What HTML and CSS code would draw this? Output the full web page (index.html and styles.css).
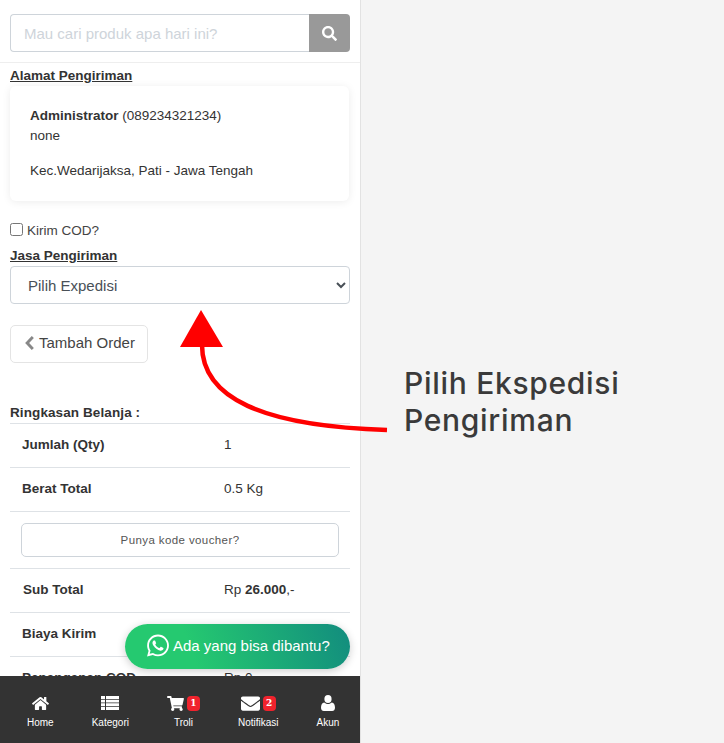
FILE: index.html
```html
<!DOCTYPE html>
<html lang="en">
<head>
    <meta charset="UTF-8">
    <meta name="viewport" content="width=device-width, initial-scale=1.0">
    <title>Checkout</title>
    <link rel="stylesheet" href="styles.css">
</head>
<body>

    <div class="page">
        <div class="app">
            <form class="search">
                <input class="search-input" type="text" placeholder="Mau cari produk apa hari ini?">
                <button class="search-btn" type="button">
                    <svg viewBox="0 0 512 512" width="15" height="15"><path fill="#fff" d="M505 442.7L405.3 343c-4.5-4.5-10.6-7-17-7H372c27.6-35.3 44-79.7 44-128C416 93.1 322.9 0 208 0S0 93.1 0 208s93.1 208 208 208c48.3 0 92.7-16.4 128-44v16.3c0 6.4 2.5 12.5 7 17l99.7 99.7c9.4 9.4 24.6 9.4 33.9 0l28.3-28.3c9.4-9.4 9.4-24.6.1-34zM208 336c-70.7 0-128-57.2-128-128 0-70.7 57.2-128 128-128 70.7 0 128 57.2 128 128 0 70.7-57.2 128-128 128z"/></svg>
                </button>
            </form>

            <div class="content">
                <div class="section-title">Alamat Pengiriman</div>
                <div class="card">
                    <div><b>Administrator</b> (089234321234)</div>
                    <div>none</div>
                    <div class="card-area">Kec.Wedarijaksa, Pati - Jawa Tengah</div>
                </div>

                <label class="cod"><input type="checkbox"> Kirim COD?</label>

                <div class="section-title">Jasa Pengiriman</div>
                <select class="courier">
                    <option>Pilih Expedisi</option>
                </select>

                <button class="back-btn" type="button">
                    <svg class="back-icon" viewBox="0 0 10 16" width="11" height="14"><path fill="#888" d="M7.600 0L10 2.400 4.600 8 10 13.600 7.600 16 0 8z"/></svg>
                    Tambah Order
                </button>

                <div class="summary-title">Ringkasan Belanja :</div>
                <table class="summary">
                    <tr><th>Jumlah (Qty)</th><td>1</td></tr>
                    <tr><th>Berat Total</th><td>0.5 Kg</td></tr>
                    <tr><td colspan="2" class="voucher-cell"><button class="voucher-btn" type="button">Punya kode voucher?</button></td></tr>
                    <tr><th class="shift">Sub Total</th><td>Rp <b>26.000</b>,-</td></tr>
                    <tr><th>Biaya Kirim</th><td></td></tr>
                    <tr><th>Penanganan COD</th><td>Rp 0</td></tr>
                </table>
            </div>

            <a class="wa-btn" href="#">
                <svg viewBox="0 0 448 512" width="22" height="25"><path fill="#fff" d="M380.9 97.1C339 55.1 283.2 32 223.9 32c-122.4 0-222 99.6-222 222 0 39.1 10.2 77.3 29.6 111L0 480l117.7-30.9c32.4 17.7 68.9 27 106.1 27h.1c122.3 0 224.1-99.6 224.1-222 0-59.3-25.2-115-67.1-157zm-157 341.6c-33.2 0-65.7-8.9-94-25.7l-6.7-4-69.8 18.3L72 359.2l-4.4-7c-18.5-29.4-28.2-63.3-28.2-98.2 0-101.7 82.8-184.5 184.6-184.5 49.3 0 95.6 19.2 130.4 54.1 34.8 34.9 56.2 81.2 56.1 130.5 0 101.8-84.9 184.6-186.6 184.6zm101.2-138.2c-5.5-2.8-32.8-16.2-37.9-18-5.1-1.9-8.8-2.8-12.5 2.8-3.7 5.6-14.3 18-17.6 21.8-3.2 3.7-6.5 4.2-12 1.4-32.6-16.3-54-29.1-75.5-66-5.7-9.8 5.7-9.1 16.3-30.3 1.8-3.7.9-6.9-.5-9.7-1.4-2.8-12.5-30.1-17.1-41.2-4.5-10.8-9.1-9.3-12.5-9.5-3.2-.2-6.9-.2-10.6-.2-3.7 0-9.7 1.4-14.8 6.9-5.1 5.6-19.4 19-19.4 46.3 0 27.3 19.9 53.7 22.6 57.4 2.8 3.7 39.1 59.7 94.8 83.8 35.2 15.2 49 16.5 66.6 13.9 10.7-1.6 32.8-13.4 37.4-26.4 4.6-13 4.6-24.1 3.2-26.4-1.3-2.5-5-3.9-10.5-6.6z"/></svg>
                Ada yang bisa dibantu?
            </a>

            <nav class="bottom-nav">
                <a class="nav-item" href="#">
                    <span class="nav-icon"><svg viewBox="0 0 576 512" width="17" height="15"><path fill="#fff" d="M280.37 148.26L96 300.11V464a16 16 0 0 0 16 16l112.06-.29a16 16 0 0 0 15.92-16V368a16 16 0 0 1 16-16h64a16 16 0 0 1 16 16v95.64a16 16 0 0 0 16 16.05L464 480a16 16 0 0 0 16-16V300L295.67 148.26a12.19 12.19 0 0 0-15.3 0zM571.6 251.47L488 182.56V44.05a12 12 0 0 0-12-12h-56a12 12 0 0 0-12 12v72.61L318.47 43a48 48 0 0 0-61 0L4.34 251.47a12 12 0 0 0-1.6 16.9l25.5 31A12 12 0 0 0 45.15 301l235.22-193.74a12.19 12.19 0 0 1 15.3 0L530.9 301a12 12 0 0 0 16.9-1.6l25.5-31a12 12 0 0 0-1.7-16.93z"/></svg></span>
                    Home
                </a>
                <a class="nav-item" href="#">
                    <span class="nav-icon"><svg viewBox="0 0 18 14" width="18" height="14"><path fill="#fff" d="M0 0h4v3H0zM5 0h13v3H5zM0 3.700h4v2.800H0zM5 3.700h13v2.800H5zM0 7.200h4V10H0zM5 7.200h13V10H5zM0 10.700h4V14H0zM5 10.700h13V14H5z"/></svg></span>
                    Kategori
                </a>
                <a class="nav-item" href="#">
                    <span class="nav-icon"><svg viewBox="0 0 576 512" width="17" height="15"><path fill="#fff" d="M528.12 301.319l47.273-208C578.806 78.301 567.391 64 551.99 64H159.208l-9.166-44.81C147.758 8.021 137.93 0 126.529 0H24C10.745 0 0 10.745 0 24v16c0 13.255 10.745 24 24 24h69.883l70.248 343.435C147.325 417.1 136 435.222 136 456c0 30.928 25.072 56 56 56s56-25.072 56-56c0-15.674-6.447-29.835-16.824-40h209.647C430.447 426.165 424 440.326 424 456c0 30.928 25.072 56 56 56s56-25.072 56-56c0-22.172-12.888-41.332-31.579-50.405l5.517-24.276c3.413-15.018-8.002-29.319-23.403-29.319H218.117l-6.545-32h293.145c11.206 0 20.92-7.754 23.403-18.681z"/></svg><span class="badge">1</span></span>
                    Troli
                </a>
                <a class="nav-item" href="#">
                    <span class="nav-icon"><svg viewBox="0 0 512 512" width="19" height="19"><path fill="#fff" d="M502.3 190.8c3.9-3.1 9.7-.2 9.7 4.7V400c0 26.5-21.5 48-48 48H48c-26.5 0-48-21.5-48-48V195.6c0-5 5.7-7.8 9.7-4.7 22.4 17.4 52.1 39.5 154.1 113.6 21.1 15.4 56.7 47.8 92.2 47.6 35.7.3 72-32.8 92.3-47.6 102-74.1 131.6-96.3 154-113.7zM256 320c23.2.4 56.6-29.2 73.4-41.4 132.7-96.3 142.8-104.7 173.4-128.7 5.8-4.5 9.2-11.5 9.2-18.9v-19c0-26.5-21.5-48-48-48H48C21.5 64 0 85.5 0 112v19c0 7.4 3.4 14.3 9.2 18.9 30.6 23.9 40.7 32.4 173.4 128.7 16.8 12.2 50.2 41.8 73.4 41.4z"/></svg><span class="badge">2</span></span>
                    Notifikasi
                </a>
                <a class="nav-item" href="#">
                    <span class="nav-icon"><svg viewBox="0 0 14 16" width="14" height="16"><ellipse cx="7" cy="4" rx="3.600" ry="4" fill="#fff"/><path fill="#fff" d="M3.200 7.400C4.200 8.300 5.500 8.900 7 8.900s2.800-.6 3.800-1.500c2 .3 3.200 2.100 3.200 5.300 0 2-1.200 3.300-2.900 3.300H2.900C1.200 16 0 14.700 0 12.700c0-3.200 1.200-5 3.200-5.300z"/></svg></span>
                    Akun
                </a>
            </nav>
        </div>

        <div class="side">
            <p class="note">Pilih Ekspedisi<br>Pengiriman</p>
        </div>

        <!-- Panah penunjuk ke pilihan expedisi -->
        <svg class="arrow" viewBox="0 0 724 743" width="724" height="743">
            <path d="M202 345C202 398 262 426 387 430" fill="none" stroke="#f00" stroke-width="4.500"/>
            <path d="M201 310L223 347H180z" fill="#f00"/>
        </svg>
    </div>

</body>
</html>
```

FILE: styles.css
```css
html, body {
    margin: 0;
    height: 100%;
    overflow: hidden;
}

body {
    font-family: "Liberation Sans", Arial, sans-serif;
    font-size: 13.5px;
    color: #333;
}

.page {
    position: relative;
    display: flex;
    height: 743px;
}

.app {
    position: relative;
    width: 360px;
    height: 743px;
    overflow: hidden;
    background-color: #fff;
    border-right: 1px solid #e2e2e2;
    flex-shrink: 0;
}

.side {
    flex: 1;
    background-color: #f4f4f4;
    padding: 365px 0 0 43px;
}

.note {
    margin: 0;
    font-family: "Inter", sans-serif;
    font-size: 30px;
    font-weight: 500;
    line-height: 37px;
    letter-spacing: 0.7px;
    color: #3a3a3a;
}

.arrow {
    position: absolute;
    top: 0;
    left: 0;
    pointer-events: none;
}

/* search */
.search {
    display: flex;
    margin: 0;
    padding: 14px 10px 10px;
    border-bottom: 1px solid #eee;
}

.search-input {
    flex: 1;
    min-width: 0;
    height: 38px;
    box-sizing: border-box;
    padding: 0 13px;
    border: 1px solid #ced4da;
    border-right: 0;
    border-radius: 4px 0 0 4px;
    font-family: inherit;
    font-size: 15px;
    outline: none;
}

.search-input::placeholder {
    color: #ced4da;
}

.search-btn {
    display: flex;
    align-items: center;
    justify-content: center;
    width: 41px;
    height: 38px;
    padding: 0;
    border: 0;
    border-radius: 0 4px 4px 0;
    background-color: #999;
}

/* content */
.content {
    padding: 4px 10px 0;
}

.section-title {
    font-weight: bold;
    line-height: 17px;
    text-decoration: underline;
}

.card {
    width: 339px;
    box-sizing: border-box;
    height: 115px;
    margin: 2px 0 19px;
    padding: 20px 20px 0;
    line-height: 20px;
    border-radius: 6px;
    box-shadow: 0 1px 8px rgba(0, 0, 0, 0.08);
}

.card-area {
    margin-top: 15px;
}

.cod {
    display: flex;
    align-items: center;
    gap: 4px;
    height: 20px;
    margin-bottom: 7px;
    color: #444;
}

.cod input {
    width: 13px;
    height: 13px;
    margin: 0 0 2px;
}

.courier {
    display: block;
    width: 340px;
    height: 38px;
    margin-top: 2px;
    padding: 0 13px;
    border: 1px solid #ced4da;
    border-radius: 4px;
    background-color: #fff;
    font-family: inherit;
    font-size: 15px;
    color: #495057;
}

.back-btn {
    display: flex;
    align-items: center;
    gap: 4px;
    width: 138px;
    height: 38px;
    margin: 21px 0 41px;
    padding: 0 13px 3px;
    border: 1px solid #e4e4e4;
    border-radius: 5px;
    background-color: #fff;
    font-family: inherit;
    font-size: 15px;
    color: #444;
    white-space: nowrap;
}

.back-icon {
    flex-shrink: 0;
}

.summary-title {
    font-weight: bold;
    line-height: 17px;
    letter-spacing: 0.1px;
}

.summary {
    width: 340px;
    margin-top: 2px;
    border-collapse: collapse;
    border-top: 1px solid #dee2e6;
}

.summary th, .summary td {
    height: 41px;
    padding: 0 12px 2px;
    border-bottom: 1px solid #dee2e6;
    text-align: left;
}

.summary th {
    width: 178px;
}

.summary th.shift {
    padding-left: 13px;
    padding-right: 11px;
}

.summary .voucher-cell {
    height: 56px;
    padding: 0 11px;
}

.voucher-btn {
    display: block;
    width: 318px;
    height: 34px;
    border: 1px solid #ced4da;
    border-radius: 5px;
    background-color: #fff;
    font-family: inherit;
    font-size: 11.5px;
    letter-spacing: 0.4px;
    color: #555;
}

/* floating whatsapp */
.wa-btn {
    position: absolute;
    left: 125px;
    top: 624px;
    display: flex;
    align-items: center;
    gap: 4px;
    width: 225px;
    height: 45px;
    box-sizing: border-box;
    padding: 0 0 2px 22px;
    border-radius: 23px;
    background: linear-gradient(70deg, #25c970 30%, #128c7e 100%);
    box-shadow: 0 2px 8px rgba(0, 0, 0, 0.2);
    color: #fff;
    font-size: 15px;
    text-decoration: none;
}

/* bottom nav */
.bottom-nav {
    position: absolute;
    left: 0;
    bottom: 0;
    display: flex;
    gap: 38px;
    width: 360px;
    height: 67px;
    box-sizing: border-box;
    padding: 17px 0 0 27px;
    background-color: #333;
}

.nav-item {
    display: flex;
    flex-direction: column;
    align-items: center;
    color: #fff;
    font-size: 10px;
    text-decoration: none;
}

.nav-icon {
    display: flex;
    align-items: center;
    gap: 3px;
    height: 20px;
    margin-bottom: 4px;
}

.badge {
    display: flex;
    align-items: center;
    justify-content: center;
    width: 13px;
    height: 15px;
    border-radius: 4px;
    background-color: #f0232d;
    font-family: "DejaVu Serif", serif;
    font-size: 9px;
    font-weight: bold;
    color: #fff;
}
```
